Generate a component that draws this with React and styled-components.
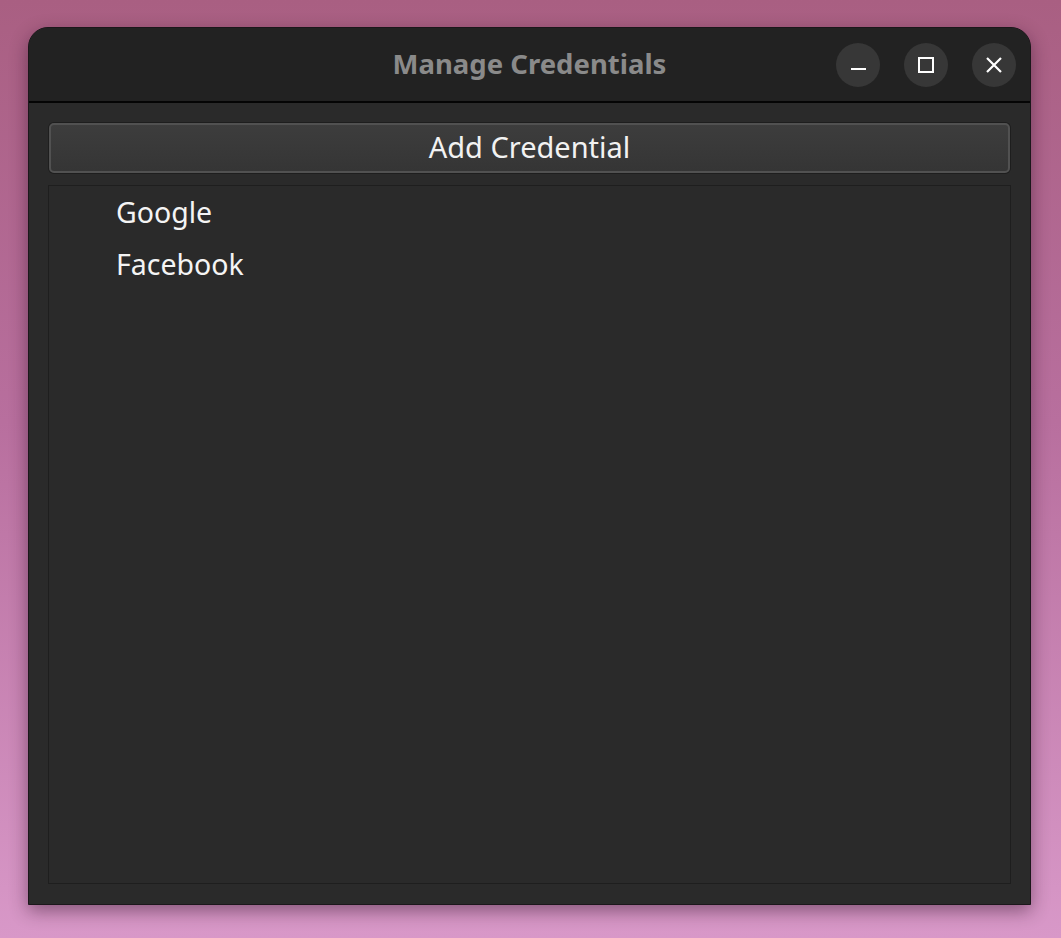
import React from 'react';
import styled, { createGlobalStyle } from 'styled-components';

const GlobalStyle = createGlobalStyle`
  html, body {
    margin: 0;
    height: 100%;
  }
  body {
    background: linear-gradient(180deg, #a95f82 0%, #b86f9e 45%, #d898c8 100%);
    font-family: "Noto Sans", "DejaVu Sans", sans-serif;
    overflow: hidden;
  }
`;

const Desktop = styled.div`
  width: 1061px;
  height: 938px;
  padding: 27px 30px 33px 28px;
  box-sizing: border-box;
  display: flex;
`;

const Window = styled.div`
  flex: 1;
  display: flex;
  flex-direction: column;
  background: #2a2a2a;
  border: 1px solid #1c171b;
  border-radius: 20px 20px 0 0;
  box-shadow: 0 6px 18px rgba(40, 10, 30, 0.45);
  overflow: hidden;
`;

const TitleBar = styled.div`
  height: 73px;
  flex-shrink: 0;
  background: #222222;
  border-bottom: 2px solid #050505;
  display: flex;
  align-items: center;
  justify-content: center;
  position: relative;
`;

const Title = styled.h1`
  margin: 0 0 2px;
  font-size: 27.5px;
  font-weight: 700;
  color: #8a8a8a;
`;

const Controls = styled.div`
  position: absolute;
  right: 14px;
  top: 15px;
  display: flex;
  gap: 24px;
`;

const ControlButton = styled.div`
  width: 44px;
  height: 44px;
  border-radius: 50%;
  background: #373737;
  display: flex;
  align-items: center;
  justify-content: center;
`;

const Body = styled.div`
  flex: 1;
  display: flex;
  flex-direction: column;
  padding: 20px 19px 20px 19px;
  gap: 12px;
`;

const AddButton = styled.button`
  height: 50px;
  margin: 0 1px;
  padding: 0 0 3px;
  border: 2px solid #515151;
  border-radius: 5px;
  background: linear-gradient(180deg, #3d3d3d 0%, #353535 100%);
  box-shadow: 0 0 0 1px #1e1e1e;
  color: #f2f2f2;
  font-family: inherit;
  font-size: 29px;
  font-weight: 400;
`;

const List = styled.ul`
  flex: 1;
  margin: 0;
  padding: 6px 0 0 67px;
  list-style: none;
  border: 1px solid #1e1e1e;
`;

const Item = styled.li`
  height: 52px;
  line-height: 40px;
  font-size: 28.5px;
  color: #f4f4f4;
`;

const MinimizeIcon = () => (
  <svg width="16" height="16" viewBox="0 0 16 16">
    <rect x="1" y="11" width="15" height="2" fill="#fff" />
  </svg>
);

const MaximizeIcon = () => (
  <svg width="16" height="16" viewBox="0 0 16 16">
    <rect x="1" y="1" width="14" height="14" fill="none" stroke="#fff" strokeWidth="2" />
  </svg>
);

const CloseIcon = () => (
  <svg width="18" height="18" viewBox="0 0 18 18">
    <path d="M2 2 L16 16 M16 2 L2 16" stroke="#fff" strokeWidth="2.2" />
  </svg>
);

const credentials = ['Google', 'Facebook'];

const App = () => (
  <>
    <GlobalStyle />
    <Desktop>
      <Window>
        <TitleBar>
          <Title>Manage Credentials</Title>
          <Controls>
            <ControlButton><MinimizeIcon /></ControlButton>
            <ControlButton><MaximizeIcon /></ControlButton>
            <ControlButton><CloseIcon /></ControlButton>
          </Controls>
        </TitleBar>
        <Body>
          <AddButton>Add Credential</AddButton>
          <List>
            {credentials.map(name => (
              <Item key={name}>{name}</Item>
            ))}
          </List>
        </Body>
      </Window>
    </Desktop>
  </>
);

export default App;
